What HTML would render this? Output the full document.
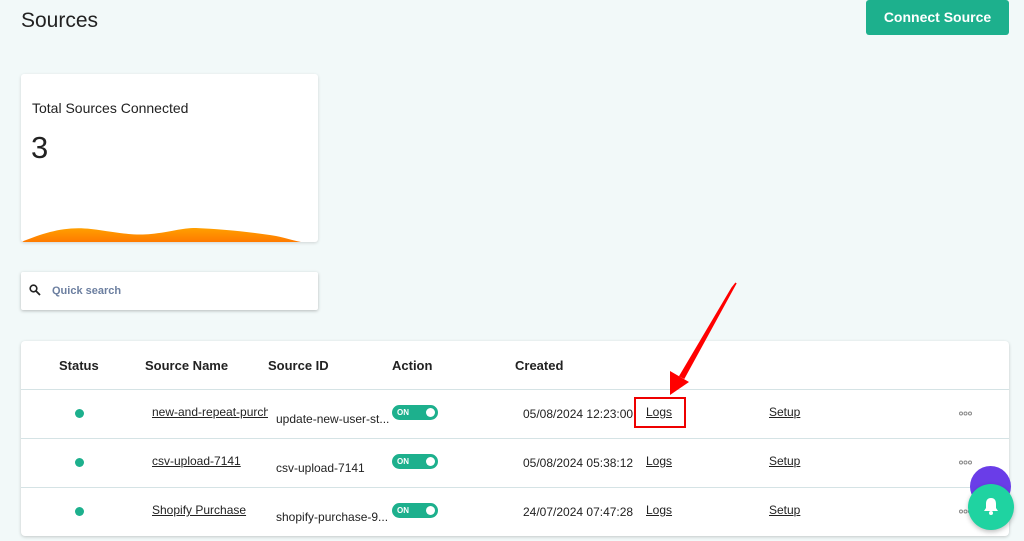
<!DOCTYPE html>
<html><head><style>
*{margin:0;padding:0;box-sizing:border-box}
body{width:1024px;height:541px;overflow:hidden;background:#f2f9f9;font-family:"Liberation Sans",sans-serif;position:relative;color:#222}
.a{position:absolute}
.u{text-decoration:underline;font-size:12px;color:#222}
.t{font-size:12px;color:#222}
.h{font-size:13px;font-weight:bold;color:#222}
.dot{width:9px;height:9px;border-radius:50%;background:#1db08d}
.tog{width:46px;height:15px;border-radius:8px;background:#1db08d;color:#fff;font-size:8px;font-weight:bold;padding-left:5px;line-height:15px}
.tog:after{content:"";position:absolute;right:3px;top:3px;width:9px;height:9px;border-radius:50%;background:#fff}
.line{left:21px;width:988px;height:1px;background:#d5e3e5}
</style></head><body>
<div class="a" style="left:21px;top:9px;font-size:21px;color:#222">Sources</div>
<div class="a" style="left:866px;top:0;width:143px;height:35px;background:#1db08d;border-radius:3px;color:#fff;font-weight:bold;font-size:14px;text-align:center;line-height:35px">Connect Source</div>
<div class="a" style="left:21px;top:74px;width:297px;height:168px;background:#fff;border-radius:3px;box-shadow:0 1px 3px rgba(0,0,0,.15);overflow:hidden">
<div class="a" style="left:11px;top:26px;font-size:14px">Total Sources Connected</div>
<div class="a" style="left:10px;top:56px;font-size:31px">3</div>
<svg class="a" style="left:0;top:140px" width="297" height="28"><defs><linearGradient id="g" x1="0" y1="0" x2="0" y2="1"><stop offset="0" stop-color="#ffa000"/><stop offset="1" stop-color="#ff7a00"/></linearGradient></defs><path d="M0 28 C25 18 45 12 70 15 C95 18 110 22 130 20 C150 18 160 14 175 14 C200 15 230 18 255 22 C265 24 270 26 280 28 Z" fill="url(#g)"/></svg>
</div>
<div class="a" style="left:21px;top:272px;width:297px;height:38px;background:#fff;border-radius:2px;box-shadow:0 1px 3px rgba(0,0,0,.25)">
<svg class="a" style="left:8px;top:12px" width="12" height="12"><circle cx="4.5" cy="4.5" r="3.3" stroke="#222" stroke-width="1.6" fill="none"/><path d="M7 7 L11 11" stroke="#222" stroke-width="1.8"/></svg>
<div class="a" style="left:31px;top:13px;font-size:11px;font-weight:bold;color:#6c7fa0">Quick search</div>
</div>
<div class="a" style="left:21px;top:341px;width:988px;height:195px;background:#fff;border-radius:4px;box-shadow:0 1px 3px rgba(0,0,0,.2)"></div>
<div class="a h" style="left:59px;top:358px">Status</div>
<div class="a h" style="left:145px;top:358px">Source Name</div>
<div class="a h" style="left:268px;top:358px">Source ID</div>
<div class="a h" style="left:392px;top:358px">Action</div>
<div class="a h" style="left:515px;top:358px">Created</div>
<div class="a line" style="top:389px"></div>
<div class="a line" style="top:438px"></div>
<div class="a line" style="top:487px"></div>

<div class="a dot" style="left:75px;top:409px"></div>
<div class="a u" style="left:152px;top:405px;width:116px;overflow:hidden;white-space:nowrap">new-and-repeat-purchase</div>
<div class="a t" style="left:276px;top:412px">update-new-user-st...</div>
<div class="a tog" style="left:392px;top:405px">ON</div>
<div class="a t" style="left:523px;top:407px">05/08/2024 12:23:00</div>
<div class="a u" style="left:646px;top:405px">Logs</div>
<div class="a" style="left:634px;top:397px;width:52px;height:31px;border:2px solid #e00"></div>
<div class="a u" style="left:769px;top:405px">Setup</div>
<svg class="a" style="left:959px;top:411px" width="14" height="5"><g fill="none" stroke="#888" stroke-width="1"><circle cx="2" cy="2.5" r="1.5"/><circle cx="6.5" cy="2.5" r="1.5"/><circle cx="11" cy="2.5" r="1.5"/></g></svg>

<div class="a dot" style="left:75px;top:458px"></div>
<div class="a u" style="left:152px;top:454px">csv-upload-7141</div>
<div class="a t" style="left:276px;top:461px">csv-upload-7141</div>
<div class="a tog" style="left:392px;top:454px">ON</div>
<div class="a t" style="left:523px;top:456px">05/08/2024 05:38:12</div>
<div class="a u" style="left:646px;top:454px">Logs</div>
<div class="a u" style="left:769px;top:454px">Setup</div>
<svg class="a" style="left:959px;top:460px" width="14" height="5"><g fill="none" stroke="#888" stroke-width="1"><circle cx="2" cy="2.5" r="1.5"/><circle cx="6.5" cy="2.5" r="1.5"/><circle cx="11" cy="2.5" r="1.5"/></g></svg>

<div class="a dot" style="left:75px;top:507px"></div>
<div class="a u" style="left:152px;top:503px">Shopify Purchase</div>
<div class="a t" style="left:276px;top:510px">shopify-purchase-9...</div>
<div class="a tog" style="left:392px;top:503px">ON</div>
<div class="a t" style="left:523px;top:505px">24/07/2024 07:47:28</div>
<div class="a u" style="left:646px;top:503px">Logs</div>
<div class="a u" style="left:769px;top:503px">Setup</div>
<svg class="a" style="left:959px;top:509px" width="14" height="5"><g fill="none" stroke="#888" stroke-width="1"><circle cx="2" cy="2.5" r="1.5"/><circle cx="6.5" cy="2.5" r="1.5"/><circle cx="11" cy="2.5" r="1.5"/></g></svg>

<svg class="a" style="left:660px;top:280px" width="80" height="120"><path d="M76 3 L72 8 L20 96 L24 98 Z" fill="#f00" stroke="#f00" stroke-width="1.5"/><path d="M10 115 L10 91 L29 102 Z" fill="#f00"/></svg>
<div class="a" style="left:970px;top:466px;width:41px;height:41px;border-radius:50%;background:#6a3de8"></div>
<div class="a" style="left:968px;top:484px;width:46px;height:46px;border-radius:50%;background:#1fd3a1;box-shadow:0 2px 5px rgba(0,0,0,.25)">
<svg class="a" style="left:14px;top:12px" width="18" height="20"><path d="M9 2 C5 2 4 5 4 8 L4 12 L2 15 L16 15 L14 12 L14 8 C14 5 13 2 9 2Z" fill="#fff"/><circle cx="9" cy="17" r="2" fill="#fff"/></svg>
</div>
</body></html>
